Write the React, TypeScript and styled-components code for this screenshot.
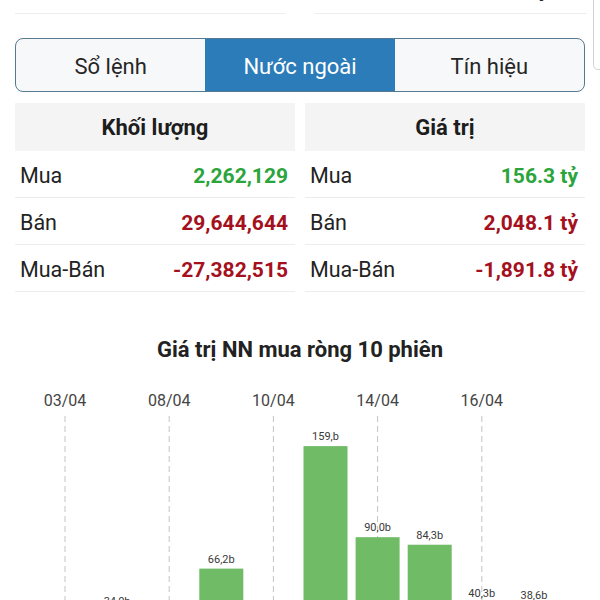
import React from 'react';
import styled, { createGlobalStyle } from 'styled-components';

type StatRow = {
  label: string;
  value: string;
  tone: 'up' | 'down';
};

type StatBlock = {
  title: string;
  rows: StatRow[];
};

type Session = {
  date: string;
  value: number;
  label: string;
};

const GlobalStyle = createGlobalStyle`
  html, body {
    margin: 0;
    padding: 0;
    background: #fff;
    overflow: hidden;
  }
  body {
    font-family: Roboto, 'Noto Sans', 'Liberation Sans', sans-serif;
    color: #212121;
  }
`;

const Page = styled.div`
  position: relative;
  width: 600px;
  height: 600px;
  overflow: hidden;
  background: #fff;
`;

const ScrollThumb = styled.div`
  position: absolute;
  top: -6px;
  right: -4px;
  width: 9px;
  height: 74px;
  border: 1px solid #d2d2d2;
  border-radius: 5px;
  background: #fff;
`;

const PrevRows = styled.div`
  display: grid;
  grid-template-columns: 270px 272px;
  justify-content: space-between;
  padding: 0 13px 0 15px;
  margin-top: -33px;
`;

const PrevCell = styled.div`
  height: 46px;
  border-bottom: 1px solid #ededed;
  display: flex;
  align-items: center;
  justify-content: flex-end;
  padding-right: 38px;
  font-size: 21px;
  font-weight: 700;
  color: #222;
`;

const TabBar = styled.div`
  display: grid;
  grid-template-columns: repeat(3, 1fr);
  margin: 24px 15px 0;
  height: 52px;
  border: 1px solid #577a93;
  border-radius: 8px;
  overflow: hidden;
  background: #f7f8f9;
`;

const Tab = styled.div<{ $active?: boolean }>`
  display: flex;
  align-items: center;
  justify-content: center;
  padding-top: 2px;
  font-size: 22px;
  color: ${(p) => (p.$active ? '#fff' : '#262626')};
  background: ${(p) => (p.$active ? '#2b7cb9' : 'transparent')};
`;

const StatsGrid = styled.div`
  display: grid;
  grid-template-columns: 1fr 1fr;
  column-gap: 10px;
  margin: 11px 15px 0;
`;

const StatTable = styled.div`
  display: flex;
  flex-direction: column;
`;

const StatHeader = styled.div`
  height: 48px;
  display: flex;
  align-items: center;
  justify-content: center;
  background: #f4f4f4;
  font-size: 22px;
  font-weight: 700;
  color: #1d1d1d;
`;

const StatLine = styled.div`
  height: 47px;
  display: flex;
  align-items: center;
  justify-content: space-between;
  padding: 3px 7px 0 5px;
  box-sizing: border-box;
  border-bottom: 1px solid #ececec;
`;

const StatLabel = styled.span`
  font-size: 21.5px;
  color: #232323;
`;

const StatValue = styled.span<{ $tone: 'up' | 'down' }>`
  font-size: 21px;
  font-weight: 700;
  color: ${(p) => (p.$tone === 'up' ? '#2ba53b' : '#a4101d')};
`;

const ChartTitle = styled.h2`
  margin: 45px 0 0;
  height: 26px;
  line-height: 26px;
  text-align: center;
  font-size: 22px;
  font-weight: 700;
  color: #222;
`;

const ChartWrap = styled.div`
  margin-top: 16px;
`;

const stats: StatBlock[] = [
  {
    title: 'Khối lượng',
    rows: [
      { label: 'Mua', value: '2,262,129', tone: 'up' },
      { label: 'Bán', value: '29,644,644', tone: 'down' },
      { label: 'Mua-Bán', value: '-27,382,515', tone: 'down' },
    ],
  },
  {
    title: 'Giá trị',
    rows: [
      { label: 'Mua', value: '156.3 tỷ', tone: 'up' },
      { label: 'Bán', value: '2,048.1 tỷ', tone: 'down' },
      { label: 'Mua-Bán', value: '-1,891.8 tỷ', tone: 'down' },
    ],
  },
];

const sessions: Session[] = [
  { date: '03/04', value: 12.4, label: '12,4b' },
  { date: '04/04', value: 34.0, label: '34,0b' },
  { date: '08/04', value: 8.1, label: '8,1b' },
  { date: '09/04', value: 66.2, label: '66,2b' },
  { date: '10/04', value: 21.7, label: '21,7b' },
  { date: '11/04', value: 159, label: '159,b' },
  { date: '14/04', value: 90.0, label: '90,0b' },
  { date: '15/04', value: 84.3, label: '84,3b' },
  { date: '16/04', value: 40.3, label: '40,3b' },
  { date: '17/04', value: 38.6, label: '38,6b' },
];

// chart geometry, svg starts at page y = 380
const BASE = 277;
const SCALE = 1.32;
const STEP = 52.1;
const FIRST = 65;
const BAR_W = 44;

const NetBuyChart = () => (
  <svg width={600} height={300} viewBox="0 0 600 300">
    {sessions.map((s, i) =>
      i % 2 === 0 ? (
        <g key={s.date}>
          <text
            x={FIRST + STEP * i}
            y={27}
            textAnchor="middle"
            fontSize={16}
            fill="#444"
            fontFamily="Roboto, sans-serif"
          >
            {s.date}
          </text>
          <line
            x1={FIRST + STEP * i}
            x2={FIRST + STEP * i}
            y1={37}
            y2={300}
            stroke="#c4c4c4"
            strokeWidth={1}
            strokeDasharray="6 4"
          />
        </g>
      ) : null
    )}
    {sessions.map((s, i) => {
      const cx = FIRST + STEP * i;
      const top = BASE - s.value * SCALE;
      return (
        <g key={`bar-${s.date}`}>
          <rect x={cx - BAR_W / 2} y={top} width={BAR_W} height={BASE - top} fill="#6fbb66" />
          <text
            x={cx}
            y={top - 6}
            textAnchor="middle"
            fontSize={11}
            fill="#3a3a3a"
            fontFamily="Roboto, sans-serif"
          >
            {s.label}
          </text>
        </g>
      );
    })}
  </svg>
);

const App = () => (
  <Page>
    <GlobalStyle />
    <PrevRows>
      <PrevCell />
      <PrevCell>tỷ</PrevCell>
    </PrevRows>
    <TabBar>
      <Tab>Sổ lệnh</Tab>
      <Tab $active>Nước ngoài</Tab>
      <Tab>Tín hiệu</Tab>
    </TabBar>
    <StatsGrid>
      {stats.map((block) => (
        <StatTable key={block.title}>
          <StatHeader>{block.title}</StatHeader>
          {block.rows.map((row) => (
            <StatLine key={row.label}>
              <StatLabel>{row.label}</StatLabel>
              <StatValue $tone={row.tone}>{row.value}</StatValue>
            </StatLine>
          ))}
        </StatTable>
      ))}
    </StatsGrid>
    <ChartTitle>Giá trị NN mua ròng 10 phiên</ChartTitle>
    <ChartWrap>
      <NetBuyChart />
    </ChartWrap>
    <ScrollThumb />
  </Page>
);

export default App;
